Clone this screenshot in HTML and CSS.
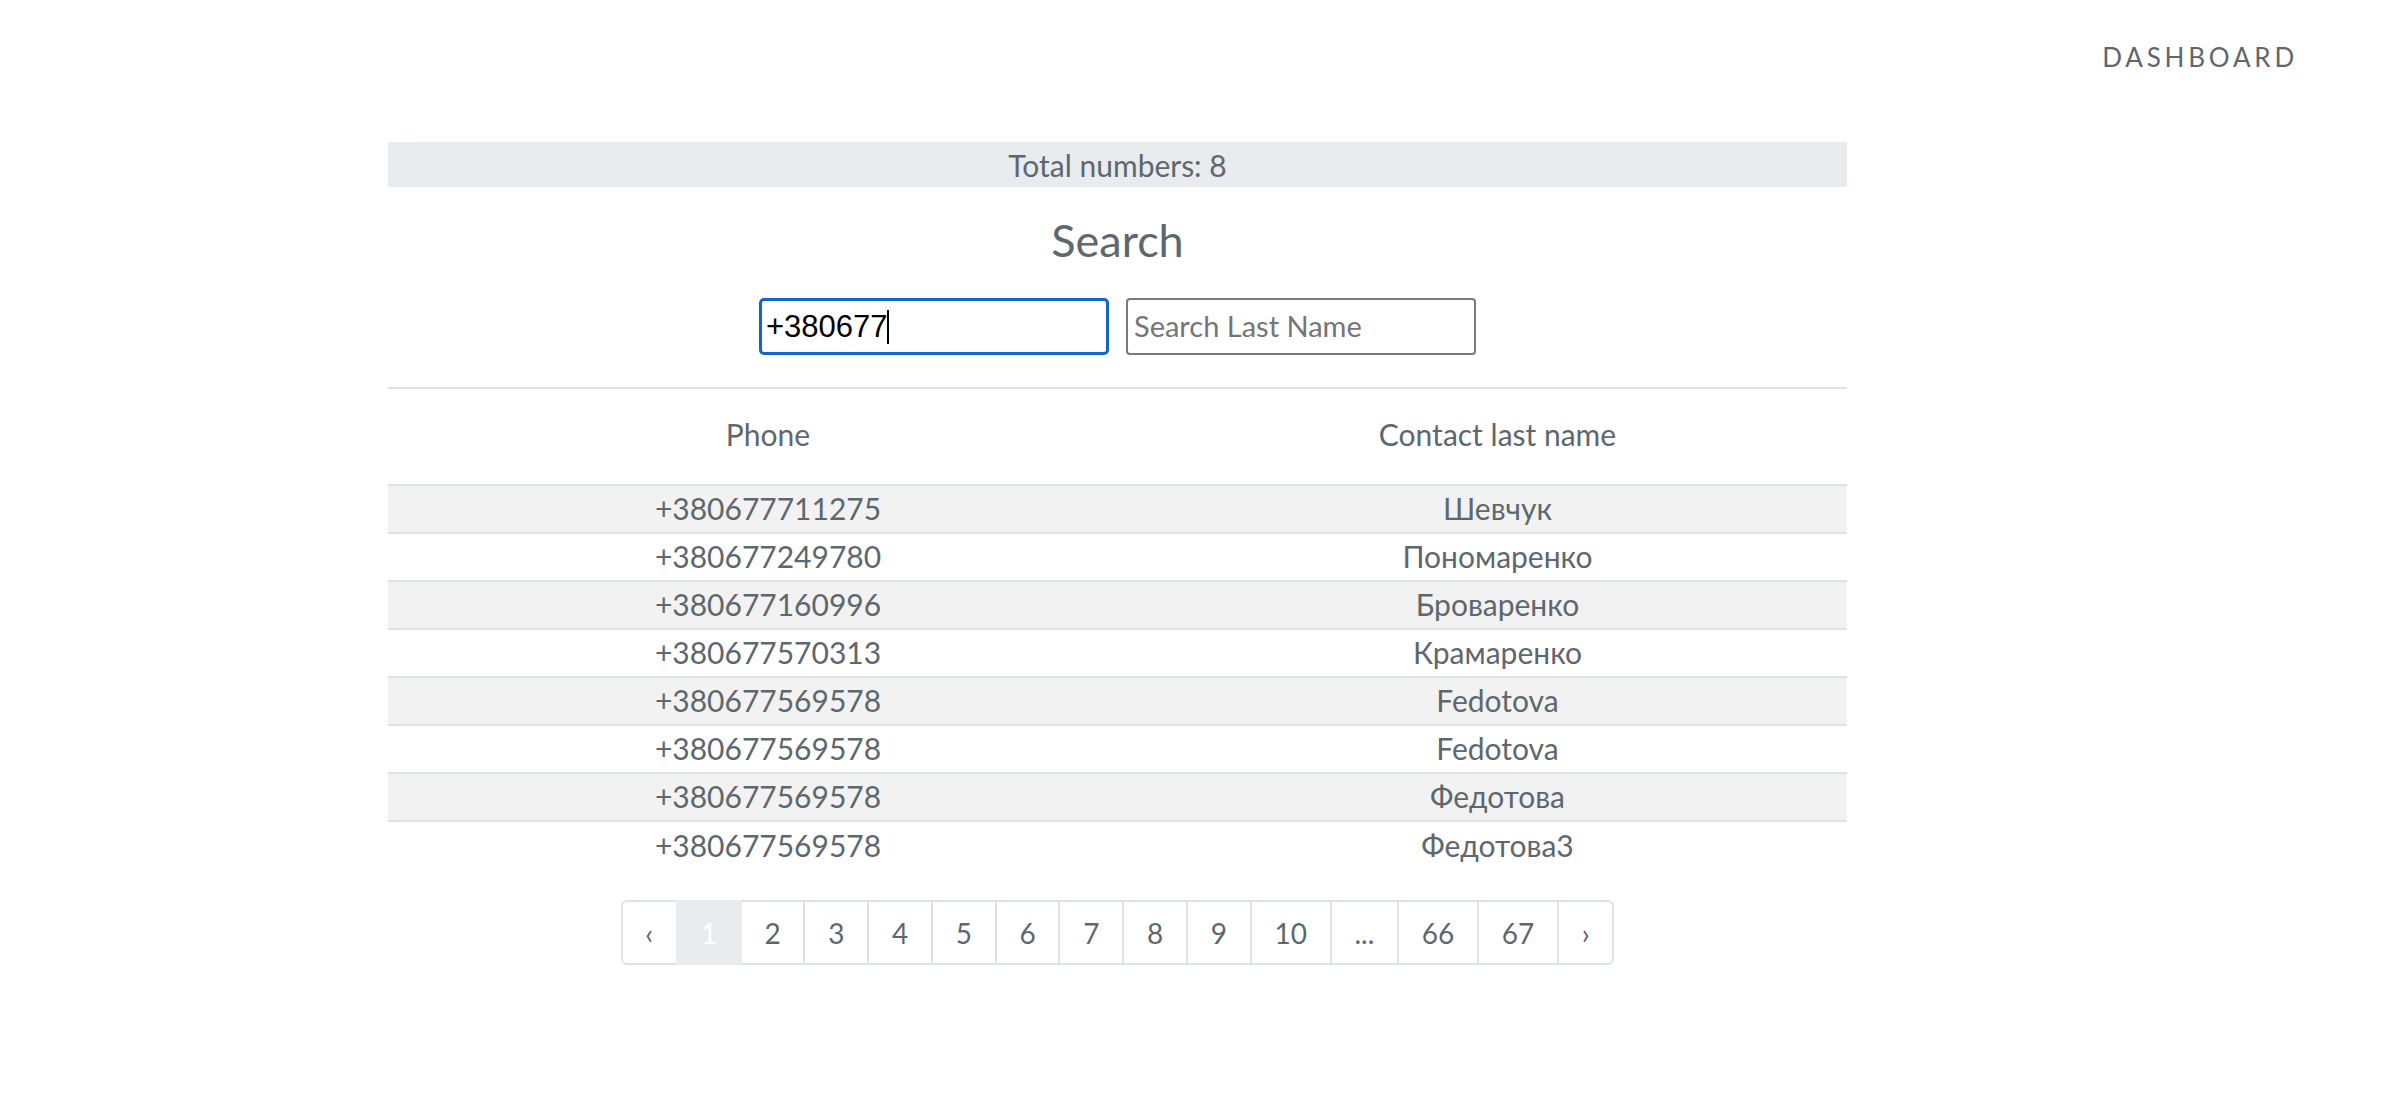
FILE: index.html
```html
<!DOCTYPE html>
<html lang="en">
<head>
<meta charset="utf-8">
<title>Numbers</title>
<link rel="stylesheet" href="styles.css">
</head>
<body>
<header class="topbar">
  <a class="nav-link" href="#">DASHBOARD</a>
</header>
<main class="container">
  <div class="total">Total numbers: 8</div>
  <h2 class="search-title">Search</h2>
  <div class="search-row">
    <span class="field-wrap">
      <input class="field field-focus" type="text" value="+380677">
      <span class="caret"></span>
    </span>
    <input class="field" type="text" placeholder="Search Last Name">
  </div>
  <table class="numbers">
    <colgroup><col class="col-phone"><col class="col-name"></colgroup>
    <thead>
      <tr><th>Phone</th><th>Contact last name</th></tr>
    </thead>
    <tbody>
      <tr><td>+380677711275</td><td>Шевчук</td></tr>
      <tr><td>+380677249780</td><td>Пономаренко</td></tr>
      <tr><td>+380677160996</td><td>Броваренко</td></tr>
      <tr><td>+380677570313</td><td>Крамаренко</td></tr>
      <tr><td>+380677569578</td><td>Fedotova</td></tr>
      <tr><td>+380677569578</td><td>Fedotova</td></tr>
      <tr><td>+380677569578</td><td>Федотова</td></tr>
      <tr><td>+380677569578</td><td>Федотова3</td></tr>
    </tbody>
  </table>
  <nav class="pager">
    <ul class="pagination">
      <li class="page-item"><a class="page-link" href="#">‹</a></li>
      <li class="page-item active"><a class="page-link" href="#">1</a></li>
      <li class="page-item"><a class="page-link" href="#">2</a></li>
      <li class="page-item"><a class="page-link" href="#">3</a></li>
      <li class="page-item"><a class="page-link" href="#">4</a></li>
      <li class="page-item"><a class="page-link" href="#">5</a></li>
      <li class="page-item"><a class="page-link" href="#">6</a></li>
      <li class="page-item"><a class="page-link" href="#">7</a></li>
      <li class="page-item"><a class="page-link" href="#">8</a></li>
      <li class="page-item"><a class="page-link" href="#">9</a></li>
      <li class="page-item"><a class="page-link" href="#">10</a></li>
      <li class="page-item"><a class="page-link" href="#">...</a></li>
      <li class="page-item"><a class="page-link" href="#">66</a></li>
      <li class="page-item"><a class="page-link" href="#">67</a></li>
      <li class="page-item"><a class="page-link" href="#">›</a></li>
    </ul>
  </nav>
</main>
</body>
</html>
```

FILE: styles.css
```css
* { box-sizing: border-box; }

body {
  margin: 0;
  background: #ffffff;
  font-family: Lato, "Noto Sans", "Liberation Sans", sans-serif;
  color: #5f676e;
}

.topbar {
  height: 114px;
  display: flex;
  align-items: center;
  justify-content: flex-end;
  padding-right: 100px;
}

.nav-link {
  font-size: 26px;
  letter-spacing: 3.8px;
  color: #5f676e;
  text-decoration: none;
}

.container {
  width: 1459px;
  margin: 28px 0 0 388px;
}

.total {
  height: 45px;
  background: #e9ecef;
  display: flex;
  align-items: center;
  justify-content: center;
  font-size: 30px;
}

.search-title {
  margin: 23px 0 0;
  height: 60px;
  line-height: 60px;
  font-size: 45px;
  font-weight: 400;
  text-align: center;
}

.search-row {
  margin-top: 28px;
  display: flex;
  justify-content: center;
  gap: 17px;
}

.field-wrap {
  position: relative;
  display: block;
}

.caret {
  position: absolute;
  left: 128px;
  top: 12px;
  width: 2px;
  height: 34px;
  background: #000000;
}

.field {
  display: block;
  width: 350px;
  height: 57px;
  padding: 0 6px;
  border: 2px solid #7a7a7a;
  border-radius: 4px;
  font-family: "Liberation Sans", Arial, sans-serif;
  font-size: 31px;
  color: #000000;
  background: #ffffff;
  outline: none;
}

.field::placeholder {
  font-family: Lato, "Noto Sans", sans-serif;
  font-size: 29px;
  color: #757575;
}

.field-focus {
  border: 3px solid #1565c7;
  border-radius: 5px;
  padding: 0 4px;
}

.numbers {
  width: 100%;
  margin-top: 32px;
  border-collapse: collapse;
  border-top: 2px solid #dee2e6;
  font-size: 30px;
}

.col-phone { width: 760px; }
.col-name { width: 699px; }

.numbers th {
  height: 97px;
  font-weight: 400;
  text-align: center;
  vertical-align: middle;
  border-bottom: 2px solid #dee2e6;
  padding: 0 0 6px;
}

.numbers td {
  height: 48px;
  padding: 0 0 2px;
  text-align: center;
  vertical-align: middle;
  border-top: 2px solid #dee2e6;
}

.numbers tbody tr:nth-child(odd) { background: #f2f2f2; }

.pager {
  margin-top: 31px;
  display: flex;
  justify-content: center;
}

.pagination {
  display: flex;
  list-style: none;
  margin: 0;
  padding: 0;
}

.page-link {
  display: flex;
  align-items: center;
  justify-content: center;
  height: 65px;
  padding: 0 22.75px;
  border: 2px solid #dee2e6;
  margin-left: -2px;
  font-size: 28px;
  color: #5f676e;
  text-decoration: none;
  background: #ffffff;
}

.page-item:first-child .page-link {
  margin-left: 0;
  border-radius: 6px 0 0 6px;
}

.page-item:last-child .page-link {
  border-radius: 0 6px 6px 0;
}

.page-item.active .page-link {
  background: #e9ecef;
  border-color: #e9ecef;
  color: #ffffff;
  position: relative;
}
```
